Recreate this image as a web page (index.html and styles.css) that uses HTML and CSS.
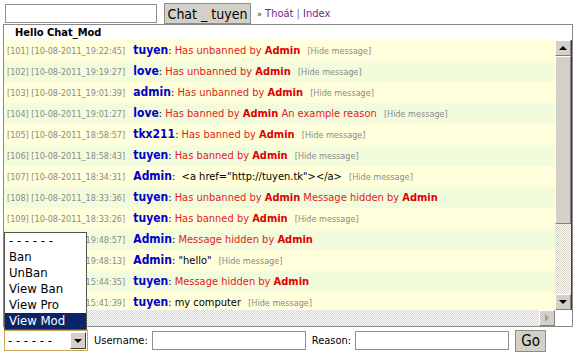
FILE: index.html
```html
<html lang="en"><head>
    <meta charset="UTF-8">
    <title>Chat Mod</title>
    <link rel="stylesheet" href="styles.css">
  </head>
  <body>
    <!-- Top bar -->
    <div class="top-bar">
      <input type="text" class="nick-input">
      <button class="win-button chat-button">Chat _ tuyen</button>
      <span class="top-links"><span class="raquo">»</span> <a href="#">Thoát</a> <span class="sep">|</span> <a href="#">Index</a></span>
    </div>

    <!-- Chat box -->
    <div class="chat-box">
      <div class="chat-title">Hello Chat_Mod</div>
      <div class="chat-view">
        <div class="chat-rows">
          <div class="chat-row"><span class="stamp">[101] [10-08-2011_19:22:45]</span> <b class="nick">tuyen</b>: <span class="sys">Has unbanned by <b>Admin</b></span> <span class="hide">[Hide message]</span></div>
          <div class="chat-row"><span class="stamp">[102] [10-08-2011_19:19:27]</span> <b class="nick">love</b>: <span class="sys">Has unbanned by <b>Admin</b></span> <span class="hide">[Hide message]</span></div>
          <div class="chat-row"><span class="stamp">[103] [10-08-2011_19:01:39]</span> <b class="nick">admin</b>: <span class="sys">Has unbanned by <b>Admin</b></span> <span class="hide">[Hide message]</span></div>
          <div class="chat-row"><span class="stamp">[104] [10-08-2011_19:01:27]</span> <b class="nick">love</b>: <span class="sys">Has banned by <b>Admin</b> An example reason</span> <span class="hide">[Hide message]</span></div>
          <div class="chat-row"><span class="stamp">[105] [10-08-2011_18:58:57]</span> <b class="nick">tkx211</b>: <span class="sys">Has banned by <b>Admin</b></span> <span class="hide">[Hide message]</span></div>
          <div class="chat-row"><span class="stamp">[106] [10-08-2011_18:58:43]</span> <b class="nick">tuyen</b>: <span class="sys">Has banned by <b>Admin</b></span> <span class="hide">[Hide message]</span></div>
          <div class="chat-row"><span class="stamp">[107] [10-08-2011_18:34:31]</span> <b class="nick">Admin</b>: &nbsp;&lt;a href="http://tuyen.tk"&gt;&lt;/a&gt; <span class="hide">[Hide message]</span></div>
          <div class="chat-row"><span class="stamp">[108] [10-08-2011_18:33:36]</span> <b class="nick">tuyen</b>: <span class="sys">Has unbanned by <b>Admin</b> Message hidden by <b>Admin</b></span></div>
          <div class="chat-row"><span class="stamp">[109] [10-08-2011_18:33:26]</span> <b class="nick">tuyen</b>: <span class="sys">Has banned by <b>Admin</b></span> <span class="hide">[Hide message]</span></div>
          <div class="chat-row"><span class="stamp">[110] [10-08-2011_19:48:57]</span> <b class="nick">Admin</b>: <span class="sys">Message hidden by <b>Admin</b></span></div>
          <div class="chat-row"><span class="stamp">[111] [10-08-2011_19:48:13]</span> <b class="nick">Admin</b>: "hello" <span class="hide">[Hide message]</span></div>
          <div class="chat-row"><span class="stamp">[112] [10-08-2011_15:44:35]</span> <b class="nick">tuyen</b>: <span class="sys">Message hidden by <b>Admin</b></span></div>
          <div class="chat-row"><span class="stamp">[113] [10-08-2011_15:41:39]</span> <b class="nick">tuyen</b>: my computer <span class="hide">[Hide message]</span></div>
        </div>
        <!-- Vertical scrollbar -->
        <div class="vscroll">
          <div class="sb-btn"><span class="arrow-up"></span></div>
          <div class="sb-thumb v-thumb"></div>
          <div class="sb-track"></div>
          <div class="sb-btn"><span class="arrow-down"></span></div>
        </div>
      </div>
      <!-- Horizontal scrollbar -->
      <div class="hscroll-row">
        <div class="hscroll">
          <div class="sb-btn"><span class="arrow-left"></span></div>
          <div class="sb-thumb h-thumb"></div>
          <div class="sb-track"></div>
          <div class="sb-btn"><span class="arrow-right off"></span></div>
        </div>
        <div class="sb-corner"></div>
      </div>
    </div>

    <!-- Moderation form -->
    <div class="mod-bar">
      <div class="mod-select">
        <span class="mod-value">- - - - - -</span>
        <span class="mod-drop"><span class="arrow-down"></span></span>
        <ul class="mod-list">
          <li>- - - - - -</li>
          <li>Ban</li>
          <li>UnBan</li>
          <li>View Ban</li>
          <li>View Pro</li>
          <li class="selected">View Mod</li>
        </ul>
      </div>
      <label class="mod-label">Username:</label>
      <input type="text" class="mod-input">
      <label class="mod-label">Reason:</label>
      <input type="text" class="mod-input">
      <button class="win-button go-button">Go</button>
    </div>
  </body></html>
```

FILE: styles.css
```css
/* General */
body {
  margin: 0;
  padding: 3px 2px 0 3px;
  font-family: "DejaVu Sans Condensed", "DejaVu Sans", sans-serif;
  font-size: 11px;
  background: #ffffff;
  color: #000;
}

.win-button {
  background: #d4d0c8;
  border: 1px solid #8c8c8c;
  font-family: "DejaVu Sans Condensed", "DejaVu Sans", sans-serif;
  padding: 0;
  color: #000;
  white-space: nowrap;
}

/* Top bar */
.top-bar {
  display: flex;
  align-items: center;
  height: 21px;
}

.nick-input {
  width: 152px;
  height: 19px;
  margin: 0 7px 0 2px;
  border: 1px solid #8f8f8f;
  box-sizing: border-box;
}

.chat-button {
  width: 87px;
  height: 21px;
  font-size: 14px;
}

.top-links {
  margin-left: 6px;
  font-size: 11px;
  color: #555;
}

.top-links .raquo {
  font-size: 9px;
  color: #333;
}

.top-links a {
  color: #6b2a8c;
  text-decoration: none;
}

.top-links .sep {
  color: #6a7aa0;
}

/* Chat box */
.chat-box {
  width: 570px;
  border: 1px solid #8a8a8a;
  box-sizing: border-box;
}

.chat-title {
  height: 15px;
  padding-left: 11px;
  font-size: 11px;
  font-weight: bold;
  line-height: 15px;
}

.chat-view {
  display: flex;
  height: 270px;
}

.chat-rows {
  flex: 1;
  overflow: hidden;
}

.chat-row {
  height: 21px;
  line-height: 21px;
  padding-left: 3px;
  white-space: nowrap;
  font-size: 11px;
  background: #ffffdc;
}

.chat-row:nth-child(even) {
  background: #f2fcdc;
}

.stamp {
  font-size: 9px;
  color: #8a8a8a;
  margin-right: 5px;
}

.nick {
  color: #0000c8;
  font-size: 12px;
}

.sys {
  color: #e21b1b;
}

.sys b {
  color: #dd0000;
}

.hide {
  font-size: 9px;
  color: #8a8a8a;
  margin-left: 4px;
}

/* Scrollbars */
.vscroll {
  width: 16px;
  display: flex;
  flex-direction: column;
  border-right: 1px solid #404040;
}

.hscroll-row {
  display: flex;
  height: 16px;
}

.hscroll {
  flex: 1;
  display: flex;
}

.sb-btn,
.sb-thumb {
  background: #d4d0c8;
  border-top: 1px solid #ffffff;
  border-left: 1px solid #ffffff;
  border-right: 1px solid #808080;
  border-bottom: 1px solid #808080;
  box-sizing: border-box;
}

.sb-btn {
  width: 16px;
  height: 16px;
  display: flex;
  align-items: center;
  justify-content: center;
  flex-shrink: 0;
}

.v-thumb {
  height: 168px;
}

.h-thumb {
  width: 60px;
}

.sb-track {
  flex: 1;
  background: repeating-conic-gradient(#d4d0c8 0 25%, #ffffff 0 50%) 0 0 / 2px 2px;
}

.sb-corner {
  width: 17px;
  background: #ffffff;
}

.arrow-up,
.arrow-down,
.arrow-left,
.arrow-right {
  width: 0;
  height: 0;
  border: 4px solid transparent;
}

.arrow-up {
  border-bottom-color: #000;
  border-top-width: 0;
}

.arrow-down {
  border-top-color: #000;
  border-bottom-width: 0;
}

.arrow-left {
  border-right-color: #000;
  border-left-width: 0;
}

.arrow-right {
  border-left-color: #000;
  border-right-width: 0;
}

.arrow-right.off {
  border-left-color: #a0a0a0;
}

/* Moderation bar */
.mod-bar {
  display: flex;
  align-items: center;
  height: 25px;
  margin-top: 1px;
}

.mod-select {
  position: relative;
  width: 84px;
  height: 21px;
  border: 1px solid #c9a654;
  box-sizing: border-box;
  display: flex;
  align-items: center;
  margin-left: 1px;
}

.mod-value {
  flex: 1;
  padding-left: 3px;
  font-size: 13px;
}

.mod-drop {
  width: 16px;
  height: 17px;
  margin-right: 1px;
  background: #d4d0c8;
  border-top: 1px solid #fff;
  border-left: 1px solid #fff;
  border-right: 1px solid #404040;
  border-bottom: 1px solid #404040;
  box-sizing: border-box;
  display: flex;
  align-items: center;
  justify-content: center;
}

.mod-list {
  position: absolute;
  left: -1px;
  bottom: 20px;
  width: 81px;
  margin: 0;
  padding: 0;
  list-style: none;
  background: #fff;
  border: 1px solid #555;
  font-size: 13px;
}

.mod-list li {
  height: 16px;
  line-height: 16px;
  padding-left: 4px;
}

.mod-list li.selected {
  background: #0a246a;
  color: #fff;
}

.mod-label {
  margin: 0 4px 0 6px;
  font-size: 11px;
}

.mod-input {
  width: 154px;
  height: 19px;
  border: 1px solid #8f8f8f;
  box-sizing: border-box;
}

.go-button {
  width: 31px;
  height: 22px;
  margin-left: 6px;
  font-size: 15px;
}
```
